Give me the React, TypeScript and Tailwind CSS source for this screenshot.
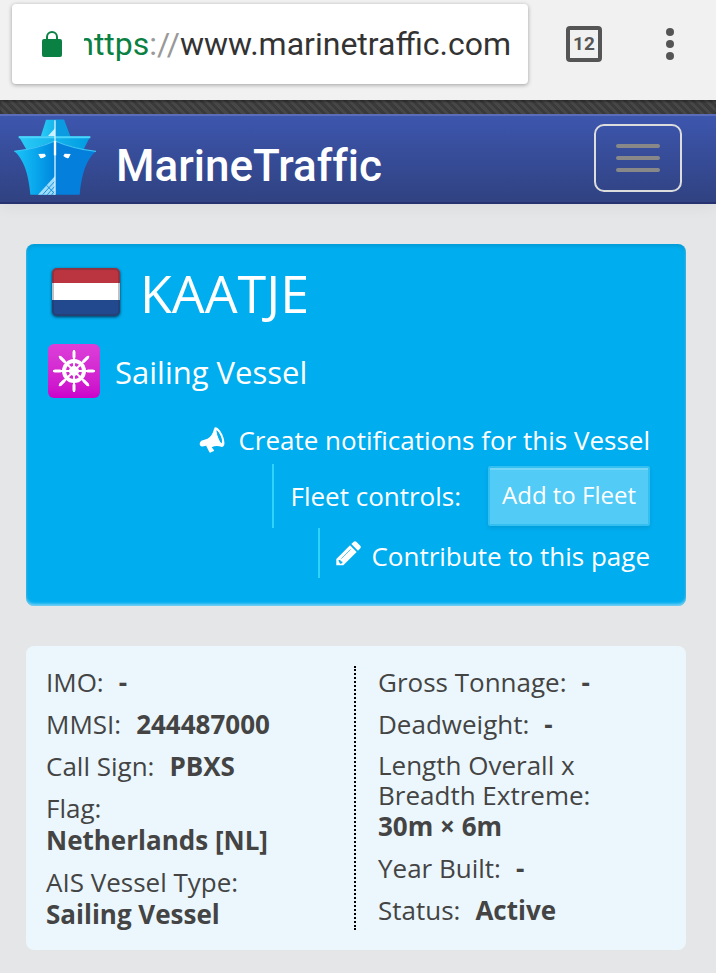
import type { ReactNode } from "react";

function LockIcon() {
  return (
    <svg className="h-[26px] w-5 shrink-0" viewBox="0 0 20 26" aria-hidden="true">
      <rect x="0" y="8" width="20" height="18" rx="2" fill="#0b8043" />
      <path d="M5 9V6a5 5 0 0 1 10 0v3" fill="none" stroke="#0b8043" strokeWidth="2" />
    </svg>
  );
}

function ShipLogo() {
  return (
    <svg className="mb-1 h-[77px] w-[82px] shrink-0" viewBox="42 68 246 231" aria-hidden="true">
      <defs>
        <linearGradient id="hullLeft" x1="0" x2="1" y1="0" y2="0">
          <stop offset="0" stopColor="#1cc4f8" />
          <stop offset="0.55" stopColor="#08a5ec" />
          <stop offset="1" stopColor="#0086de" />
        </linearGradient>
        <linearGradient id="bridge" x1="0" x2="1" y1="0" y2="0">
          <stop offset="0" stopColor="#2accf6" />
          <stop offset="1" stopColor="#009be2" />
        </linearGradient>
      </defs>
      <path d="M138 73H192L211 124H122Z" fill="url(#bridge)" />
      <path d="M165 73H192L211 124H165Z" fill="#0a9be0" />
      <path d="M142 124L165 99V124Z" fill="#c9f0ff" />
      <path d="M56 123H271L250 164L165 138L80 164Z" fill="url(#bridge)" />
      <path d="M56 126H271" stroke="#4ed4fa" strokeWidth="6" />
      <path d="M165 137C130 152 82 164 43 168C70 190 86 235 91 298H165Z" fill="url(#hullLeft)" />
      <path d="M165 137C200 152 248 164 288 168C260 190 245 235 239 298H165Z" fill="#047fdc" />
      <path d="M43 168C82 164 130 152 165 137C200 152 248 164 288 168" fill="none" stroke="#3ac6f6" strokeWidth="4" />
      <path d="M165 242L114 298H165Z" fill="#9fdcfa" />
      <path d="M128 298L165 257M142 298L165 272M155 298L165 286M140 270L165 296" stroke="#1592de" strokeWidth="3" />
      <path d="M165 75V298" stroke="#d9f5ff" strokeWidth="4" />
      <path d="M165 137V180" stroke="#fff" strokeWidth="7" />
      <path d="M115 176L134 175L138 182Q130 190 121 188Z" fill="#fff" />
      <path d="M212 176L194 175L190 182Q198 190 206 188Z" fill="#fff" />
    </svg>
  );
}

function DutchFlag() {
  return (
    <svg className="h-[56px] w-[76px] shrink-0" viewBox="0 0 76 56" role="img" aria-label="Netherlands">
      <defs>
        <clipPath id="flagShape">
          <rect x="4" y="3" width="68" height="48" rx="5" />
        </clipPath>
        <filter id="flagShadow" x="-10%" y="-10%" width="120%" height="130%">
          <feDropShadow dx="0" dy="1" stdDeviation="1.4" floodColor="#06233f" floodOpacity="0.9" />
        </filter>
      </defs>
      <g filter="url(#flagShadow)">
        <g clipPath="url(#flagShape)">
          <rect x="4" y="3" width="68" height="16" fill="#bb3440" />
          <rect x="4" y="18" width="68" height="18" fill="#fff" />
          <rect x="4" y="35" width="68" height="16" fill="#24488e" />
        </g>
        <rect x="5" y="4" width="66" height="46" rx="4" fill="none" stroke="#33303f" strokeOpacity="0.3" strokeWidth="2" />
      </g>
    </svg>
  );
}

const spokes = [0, 45, 90, 135, 180, 225, 270, 315];

function WheelIcon() {
  return (
    <span className="flex h-[54px] w-[52px] shrink-0 items-center justify-center rounded-md bg-linear-to-b from-[#dc3ed8] to-[#cb00cb]">
      <svg className="size-11" viewBox="-22 -22 44 44" fill="none" stroke="#fff" aria-hidden="true">
        <circle r="10" strokeWidth="4" />
        <circle r="5" fill="#fff" stroke="none" />
        {spokes.map((angle) => (
          <g key={angle} transform={`rotate(${angle})`}>
            <path d="M0 -4V-21" strokeWidth="2" />
            <path d="M0 -14V-19" strokeWidth="3" strokeLinecap="round" />
          </g>
        ))}
      </svg>
    </span>
  );
}

function BullhornIcon() {
  return (
    <svg className="size-[26px] shrink-0" viewBox="0 0 78 80" fill="#fff" aria-hidden="true">
      <path d="M46 3Q40 29 25 36L6 42Q-2 49 3 58Q7 62 13 59L21 58L31 78Q33 80 36 78L45 74Q46 72 44 70L38 62Q52 55 69 61Z" />
      <path
        fillRule="evenodd"
        d="M46 2Q50 -1 56 3C68 13 79 36 77 54Q75 63 67 61C58 50 48 24 46 2ZM53 10C54 24 60 40 68 50C73 42 64 19 53 10Z"
      />
      <path d="M53 10C54 24 60 40 68 50C73 42 64 19 53 10Z" fill="#00adef" />
    </svg>
  );
}

function PencilIcon() {
  return (
    <svg className="size-[25px] shrink-0" viewBox="0 0 75 75" aria-hidden="true">
      <path d="M46 9L53 2Q57 -1 61 2L73 14Q76 18 73 22L66 29Z" fill="#fff" />
      <path d="M42 13L62 33L22 73H1V54Z" fill="#fff" />
      <path d="M16 53L44 25" stroke="#00adef" strokeWidth="2" />
      <path d="M7 58L13 56L14 61L20 62L18 67L12 68Z" fill="#00adef" />
    </svg>
  );
}

function Fact({ label, value, below = false }: { label: ReactNode; value: string; below?: boolean }) {
  return (
    <div className={below ? "block" : "flex gap-[15px]"}>
      <dt>{label}</dt>
      <dd className="font-bold">{value}</dd>
    </div>
  );
}

export default function App() {
  return (
    <div className="min-h-screen bg-[#e5e6e8] pb-6 font-['Open_Sans',sans-serif]">
      <div className="flex h-[100px] items-center bg-[#f1f1f1] pb-3 pl-3 font-[Roboto,sans-serif]">
        <div className="flex h-20 min-w-0 flex-1 items-center gap-[22px] rounded bg-white pr-[17px] pl-[30px] shadow-[0_1px_4px_rgba(0,0,0,0.35)]">
          <LockIcon />
          <div className="flex min-w-0 flex-1 justify-end overflow-hidden text-[32px] leading-10 whitespace-nowrap text-[#333]">
            <span className="text-[#0b8043]">https</span>
            <span className="text-[#999]">://</span>
            <span>www.marinetraffic.com</span>
          </div>
        </div>
        <button
          type="button"
          aria-label="Open tabs"
          className="ml-[38px] flex size-9 items-center justify-center rounded border-4 border-[#555] font-[Roboto,sans-serif] text-[19px] leading-5 font-bold text-[#555]"
        >
          12
        </button>
        <button type="button" aria-label="Browser menu" className="mr-[30px] ml-[52px] flex w-8 flex-col items-center gap-1">
          <span className="size-2 rounded-full bg-[#555]" />
          <span className="size-2 rounded-full bg-[#555]" />
          <span className="size-2 rounded-full bg-[#555]" />
        </button>
      </div>

      <div className="h-[14px] bg-[repeating-linear-gradient(45deg,#3b3b3b_0px,#3b3b3b_3px,#484848_3px,#484848_6px)] shadow-[inset_0_2px_2px_rgba(0,0,0,0.3)]" />

      <header className="flex h-[90px] items-center justify-between border-t-2 border-b-2 border-t-[#5b6cb8] border-b-[#263370] bg-linear-to-b from-[#3d56ae] to-[#304281] pr-[34px] pb-[2px] pl-[14px] shadow-[0_2px_16px_rgba(0,0,0,0.06)]">
        <a
          href="#home"
          className="flex items-center gap-5 font-[Roboto,sans-serif] text-[44px] leading-[52px] font-medium text-white [font-variant-ligatures:none]"
        >
          <ShipLogo />
          <span className="mt-4">MarineTraffic</span>
        </a>
        <button
          type="button"
          aria-label="Toggle navigation"
          className="flex h-[68px] w-[88px] flex-col items-center justify-center gap-2 rounded-[10px] border-2 border-[#ddd]"
        >
          <span className="h-1 w-11 rounded-sm bg-[#888]" />
          <span className="h-1 w-11 rounded-sm bg-[#888]" />
          <span className="h-1 w-11 rounded-sm bg-[#888]" />
        </button>
      </header>

      <main className="pt-10 pr-[30px] pl-[26px]">
        <section className="rounded-lg bg-[#00adef] pt-3 pr-9 pb-7 pl-[22px] text-white shadow-[inset_0_2px_4px_rgba(0,0,0,0.12),inset_0_-2px_3px_rgba(255,255,255,0.5)]">
          <div className="flex h-[74px] items-center gap-4">
            <DutchFlag />
            <h1 className="text-[52px] leading-[72px]">KAATJE</h1>
          </div>
          <div className="mt-[6px] flex h-[70px] items-center gap-[15px]">
            <WheelIcon />
            <h2 className="pt-[2px] text-[31px] leading-10">Sailing Vessel</h2>
          </div>
          <div className="mt-[10px] flex flex-col items-end text-[26px] leading-8">
            <a href="#notifications" className="flex h-12 items-center gap-[13px]">
              <BullhornIcon />
              Create notifications for this Vessel
            </a>
            <div className="flex h-16 items-center border-l-2 border-[#2fd3f7] pl-4">
              <span>Fleet controls:</span>
              <button
                type="button"
                className="ml-[27px] h-[60px] rounded-xs border-2 border-[#33bff0] bg-[#52cbf6] px-3 pb-[2px] text-[24px] leading-8 shadow-[inset_0_2px_0_rgba(255,255,255,0.2),0_2px_4px_rgba(0,0,0,0.1)]"
              >
                Add to Fleet
              </button>
            </div>
            <a href="#contribute" className="flex h-[50px] items-center gap-[10px] border-l-2 border-[#2fd3f7] pl-4">
              <PencilIcon />
              <span className="pt-[6px]">Contribute to this page</span>
            </a>
          </div>
        </section>

        <section className="mt-10 grid grid-cols-2 rounded-lg bg-[#ebf7fc] p-5 text-[26px] leading-8 text-[#444]">
          <dl className="flex flex-col gap-[10px] border-r-2 border-dotted border-black">
            <Fact label="IMO:" value="-" />
            <Fact label="MMSI:" value="244487000" />
            <Fact label="Call Sign:" value="PBXS" />
            <Fact label="Flag:" value="Netherlands [NL]" below />
            <Fact label="AIS Vessel Type:" value="Sailing Vessel" below />
          </dl>
          <dl className="flex flex-col gap-[10px] pl-[22px]">
            <Fact label="Gross Tonnage:" value="-" />
            <Fact label="Deadweight:" value="-" />
            <Fact
              label={<span className="block leading-[30px]">Length Overall x Breadth Extreme:</span>}
              value="30m × 6m"
              below
            />
            <Fact label="Year Built:" value="-" />
            <Fact label="Status:" value="Active" />
          </dl>
        </section>
      </main>
    </div>
  );
}
